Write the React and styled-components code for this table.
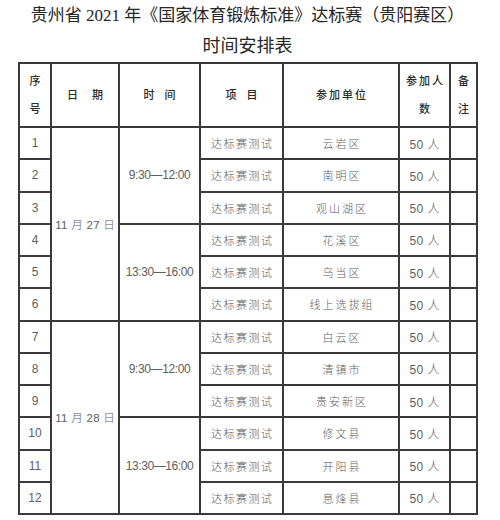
import React from 'react';
import styled, { createGlobalStyle } from 'styled-components';

const GlobalStyle = createGlobalStyle`
  html, body {
    margin: 0;
    padding: 0;
    background: #fff;
  }
`;

const Page = styled.div`
  width: 495px;
  display: flex;
  flex-direction: column;
  align-items: center;
`;

const Title = styled.div`
  font-family: "Liberation Serif", "Noto Sans CJK SC", serif;
  font-size: ${props => props.size}px;
  line-height: 31px;
  color: #262626;
  font-weight: 400;
  white-space: nowrap;
`;

const Table = styled.table`
  border-collapse: collapse;
  table-layout: fixed;
  width: 458px;
  margin-left: 18px;
  align-self: flex-start;
  font-family: "Liberation Sans", "Noto Sans CJK SC", sans-serif;

  td, th {
    border: 2px solid #3a3a3a;
    text-align: center;
    vertical-align: middle;
  }
`;

const HeadRow = styled.tr`
  height: 64px;
`;

const Head = styled.th`
  font-size: 11px;
  font-weight: 500;
  color: #2a2a2a;
  line-height: 28px;
  letter-spacing: ${props => props.spacing || 1.5}px;
  padding: 0 0 0 ${props => props.spacing || 1.5}px;
  white-space: nowrap;
`;

const BodyRow = styled.tr`
  height: 32.25px;
`;

const Cell = styled.td`
  font-size: ${props => props.size || 11}px;
  font-weight: 300;
  color: #606060;
  letter-spacing: ${props => props.spacing}px;
  padding: 0 0 0 ${props => props.spacing}px;
  white-space: nowrap;
`;

const schedule = [
  { date: '11 月 27 日', slots: [
    { time: '9:30—12:00', units: ['云岩区', '南明区', '观山湖区'] },
    { time: '13:30—16:00', units: ['花溪区', '乌当区', '线上选拔组'] },
  ] },
  { date: '11 月 28 日', slots: [
    { time: '9:30—12:00', units: ['白云区', '清镇市', '贵安新区'] },
    { time: '13:30—16:00', units: ['修文县', '开阳县', '息烽县'] },
  ] },
];

const App = () => {
  let idx = 0;
  const rows = [];
  schedule.forEach(day => {
    day.slots.forEach((slot, si) => {
      slot.units.forEach((unit, ui) => {
        idx += 1;
        rows.push(
          <BodyRow key={idx}>
            <Cell size={12} spacing={0}>{idx}</Cell>
            {si === 0 && ui === 0 && <Cell size={11.5} spacing={0.3} rowSpan={6}>{day.date}</Cell>}
            {ui === 0 && <Cell size={12} spacing={-0.4} rowSpan={3}>{slot.time}</Cell>}
            <Cell spacing={1.5}>达标赛测试</Cell>
            <Cell spacing={2}>{unit}</Cell>
            <Cell size={12} spacing={0.4}>50 人</Cell>
            <Cell spacing={0} />
          </BodyRow>
        );
      });
    });
  });

  return (
    <Page>
      <GlobalStyle />
      <Title size={17}>贵州省 2021 年《国家体育锻炼标准》达标赛（贵阳赛区）</Title>
      <Title size={18}>时间安排表</Title>
      <Table>
        <colgroup>
          <col style={{ width: 32 }} />
          <col style={{ width: 68 }} />
          <col style={{ width: 81 }} />
          <col style={{ width: 83 }} />
          <col style={{ width: 116 }} />
          <col style={{ width: 51 }} />
          <col style={{ width: 27 }} />
        </colgroup>
        <thead>
          <HeadRow>
            <Head>序<br />号</Head>
            <Head spacing={14}>日期</Head>
            <Head spacing={10}>时间</Head>
            <Head spacing={10}>项目</Head>
            <Head spacing={2}>参加单位</Head>
            <Head spacing={2}>参加人<br />数</Head>
            <Head>备<br />注</Head>
          </HeadRow>
        </thead>
        <tbody>{rows}</tbody>
      </Table>
    </Page>
  );
};

export default App;
